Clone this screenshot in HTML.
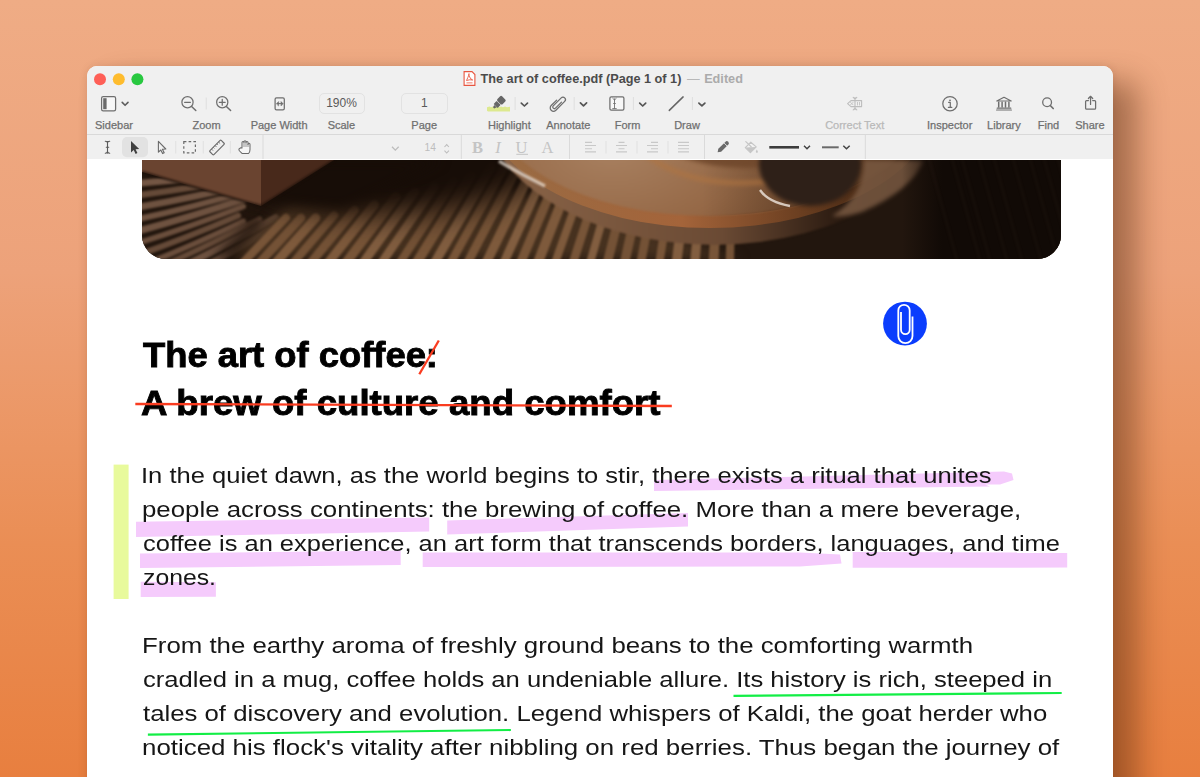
<!DOCTYPE html>
<html><head><meta charset="utf-8">
<style>
html,body{margin:0;padding:0;width:1200px;height:777px;overflow:hidden;}
body{position:relative;font-family:"Liberation Sans",sans-serif;
background:linear-gradient(180deg,#efac85 0%,#eda27a 35%,#ea8e55 70%,#e87f3f 100%);}
#shadow{position:absolute;left:87px;top:66px;width:1026px;height:800px;border-radius:10px;box-shadow:24px 16px 30px 0px rgba(70,30,8,0.42), 0 0 8px rgba(80,35,10,0.12);}
#win{position:absolute;left:87px;top:66px;width:1026px;height:760px;border-radius:10px 10px 0 0;background:#fff;}
#tb{position:absolute;left:87px;top:66px;width:1026px;height:93px;border-radius:10px 10px 0 0;background:#f0f0f0;}
#sep1{position:absolute;left:87px;top:134px;width:1026px;height:1px;background:#d9d9d9;}
#tb2{position:absolute;left:87px;top:135px;width:1026px;height:24px;background:#f0f0f0;}
#photo{position:absolute;left:142px;top:160px;width:919px;height:98.5px;border-radius:0 0 24px 24px;overflow:hidden;background:#2a1a10;}
#photo svg{display:block}
#title{position:absolute;left:480.5px;top:71px;font-size:12.7px;line-height:16px;color:#4b4b4b;white-space:nowrap;}
#title .dash{color:#b8b8b8;font-weight:normal;margin-left:2px}
#title .ed{color:#ababab;font-weight:bold;margin-left:1px}
.lbl{position:absolute;top:119.1px;-webkit-text-stroke:0.25px currentColor;width:120px;font-size:11px;line-height:13px;color:#707070;white-space:nowrap;text-align:center;}
.box{position:absolute;top:92.5px;height:21px;box-sizing:border-box;border:1px solid #e2e2e2;border-radius:5px;font-size:12px;line-height:19px;text-align:center;color:#5a5a5a;}
.txt{position:absolute;white-space:pre;color:#161616;font-size:22px;transform-origin:0 0;}
.h{position:absolute;white-space:pre;color:#000;font-weight:bold;font-size:35px;transform-origin:0 0;-webkit-text-stroke:0.9px #000;}
svg.ov{position:absolute;left:0;top:0;}

</style></head><body>
<div id="shadow"></div>
<div id="win"></div>
<div id="tb"></div>
<div id="sep1"></div>
<div id="photo"><svg width="919" height="99" viewBox="0 0 919 99">
<defs><filter id="b05" filterUnits="userSpaceOnUse" color-interpolation-filters="sRGB" x="-100" y="-100" width="1120" height="300"><feGaussianBlur stdDeviation="0.6"/></filter><filter id="b1" filterUnits="userSpaceOnUse" color-interpolation-filters="sRGB" x="-100" y="-100" width="1120" height="300"><feGaussianBlur stdDeviation="1.1"/></filter><filter id="b2" filterUnits="userSpaceOnUse" color-interpolation-filters="sRGB" x="-100" y="-100" width="1120" height="300"><feGaussianBlur stdDeviation="2.2"/></filter><filter id="b3" filterUnits="userSpaceOnUse" color-interpolation-filters="sRGB" x="-100" y="-100" width="1120" height="300"><feGaussianBlur stdDeviation="6"/></filter><filter id="b8" filterUnits="userSpaceOnUse" color-interpolation-filters="sRGB" x="-100" y="-100" width="1120" height="300"><feGaussianBlur stdDeviation="16"/></filter>
 <radialGradient id="gSau" gradientUnits="userSpaceOnUse" cx="480" cy="15" r="340">
  <stop offset="0" stop-color="#a57852"/><stop offset="0.3" stop-color="#936644"/><stop offset="0.55" stop-color="#74503a"/><stop offset="0.8" stop-color="#3e2818"/><stop offset="1" stop-color="#22150c"/>
 </radialGradient>
 <linearGradient id="gSide" gradientUnits="userSpaceOnUse" x1="340" y1="0" x2="830" y2="0">
  <stop offset="0" stop-color="#8a6244"/><stop offset="0.4" stop-color="#6e4c34"/><stop offset="0.7" stop-color="#2e1c10"/><stop offset="1" stop-color="#120b07"/>
 </linearGradient>
 <linearGradient id="gRim" gradientUnits="userSpaceOnUse" x1="340" y1="0" x2="830" y2="0">
  <stop offset="0" stop-color="#9a6a44"/><stop offset="0.35" stop-color="#a8622e"/><stop offset="0.62" stop-color="#7a4622"/><stop offset="1" stop-color="#20130a"/>
 </linearGradient>
 <linearGradient id="gR" gradientUnits="userSpaceOnUse" x1="760" y1="0" x2="800" y2="0"><stop offset="0" stop-color="#110a06" stop-opacity="0"/><stop offset="1" stop-color="#110a06" stop-opacity="1"/></linearGradient>
</defs>
<rect width="919" height="99" fill="#22160e"/>
<g filter="url(#b1)"><path d="M-12.0 24.0 Q55.5 18.7 127.0 7.3" stroke="#735644" stroke-width="6.9" fill="none" stroke-linecap="round"/><path d="M-12.0 36.3 Q53.1 28.2 122.2 14.2" stroke="#654a38" stroke-width="6.5" fill="none" stroke-linecap="round"/><path d="M-12.0 48.6 Q50.6 38.1 117.2 21.5" stroke="#6e5240" stroke-width="6.7" fill="none" stroke-linecap="round"/><path d="M-12.0 60.9 Q48.0 48.1 112.0 29.3" stroke="#6e5240" stroke-width="6.0" fill="none" stroke-linecap="round"/><path d="M-12.0 73.2 Q45.4 58.4 106.8 37.6" stroke="#6e5240" stroke-width="6.9" fill="none" stroke-linecap="round"/><path d="M-12.0 85.5 Q42.7 69.0 101.4 46.4" stroke="#6a4e3c" stroke-width="5.6" fill="none" stroke-linecap="round"/><path d="M-12.0 97.8 Q40.0 79.8 96.1 55.7" stroke="#654a38" stroke-width="6.1" fill="none" stroke-linecap="round"/><path d="M-1.3 106.0 Q48.1 86.7 101.4 61.3" stroke="#6a4e3c" stroke-width="5.6" fill="none" stroke-linecap="round"/><path d="M20.1 106.0 Q66.8 85.6 117.5 59.3" stroke="#654a38" stroke-width="5.6" fill="none" stroke-linecap="round"/><path d="M41.6 106.0 Q85.6 84.8 133.7 57.7" stroke="#6e5240" stroke-width="6.9" fill="none" stroke-linecap="round"/><path d="M63.0 106.0 Q104.4 84.2 149.9 56.5" stroke="#6e5240" stroke-width="6.4" fill="none" stroke-linecap="round"/></g>
<path d="M70 99 L112 56 L126 60 L98 99 Z" fill="#1c110a" filter="url(#b3)" opacity="0.8"/>
<path d="M90 99 L150 40 L340 20 L600 99 Z" fill="#46311f" filter="url(#b3)"/>
<g filter="url(#b1)"><path d="M96.0 108.0 L143.9 57.8" stroke="#785538" stroke-width="8.1" stroke-linecap="round"/><path d="M112.7 108.0 L159.0 57.8" stroke="#745236" stroke-width="8.6" stroke-linecap="round"/><path d="M129.1 108.0 L173.8 57.8" stroke="#7e5a3c" stroke-width="9.1" stroke-linecap="round"/><path d="M146.8 108.0 L192.1 55.2" stroke="#745236" stroke-width="8.2" stroke-linecap="round"/><path d="M164.5 108.0 L212.4 49.9" stroke="#745236" stroke-width="8.7" stroke-linecap="round"/><path d="M182.1 108.0 L232.3 44.6" stroke="#7e5a3c" stroke-width="9.1" stroke-linecap="round"/><path d="M200.0 108.0 L254.0 36.7" stroke="#785538" stroke-width="9.4" stroke-linecap="round"/><path d="M217.3 108.0 L272.8 31.4" stroke="#825e40" stroke-width="8.9" stroke-linecap="round"/><path d="M236.0 108.0 L292.5 26.2" stroke="#825e40" stroke-width="8.6" stroke-linecap="round"/><path d="M254.4 108.0 L311.4 20.9" stroke="#745236" stroke-width="8.2" stroke-linecap="round"/><path d="M271.3 108.0 L328.8 15.6" stroke="#785538" stroke-width="9.8" stroke-linecap="round"/><path d="M289.5 108.0 L348.5 7.7" stroke="#825e40" stroke-width="9.2" stroke-linecap="round"/><path d="M305.7 108.0 L361.6 7.7" stroke="#785538" stroke-width="8.3" stroke-linecap="round"/><path d="M322.8 108.0 L375.4 7.7" stroke="#785538" stroke-width="8.8" stroke-linecap="round"/><path d="M341.6 108.0 L390.7 7.7" stroke="#7e5a3c" stroke-width="9.5" stroke-linecap="round"/><path d="M359.4 108.0 L405.1 7.7" stroke="#825e40" stroke-width="8.7" stroke-linecap="round"/><path d="M376.4 108.0 L418.9 7.7" stroke="#785538" stroke-width="9.2" stroke-linecap="round"/><path d="M393.8 108.0 L433.0 7.7" stroke="#7e5a3c" stroke-width="9.9" stroke-linecap="round"/><path d="M411.2 108.0 L447.1 7.7" stroke="#7e5a3c" stroke-width="8.1" stroke-linecap="round"/><path d="M429.3 108.0 L461.7 7.7" stroke="#785538" stroke-width="8.6" stroke-linecap="round"/><path d="M446.5 108.0 L475.6 7.7" stroke="#825e40" stroke-width="8.0" stroke-linecap="round"/><path d="M463.9 108.0 L489.7 7.7" stroke="#745236" stroke-width="9.2" stroke-linecap="round"/><path d="M481.3 108.0 L503.9 7.7" stroke="#745236" stroke-width="9.5" stroke-linecap="round"/><path d="M497.7 108.0 L517.2 7.7" stroke="#745236" stroke-width="8.8" stroke-linecap="round"/><path d="M516.5 108.0 L532.3 7.7" stroke="#785538" stroke-width="8.2" stroke-linecap="round"/><path d="M533.8 108.0 L546.4 7.7" stroke="#825e40" stroke-width="9.8" stroke-linecap="round"/><path d="M552.3 108.0 L561.3 7.7" stroke="#825e40" stroke-width="9.4" stroke-linecap="round"/><path d="M571.2 108.0 L576.7 7.7" stroke="#785538" stroke-width="9.9" stroke-linecap="round"/><path d="M587.7 108.0 L590.0 7.7" stroke="#745236" stroke-width="8.3" stroke-linecap="round"/></g>
<ellipse cx="250" cy="5" rx="150" ry="50" fill="#170d07" filter="url(#b8)"/>
<path d="M110 40 L200 48 L300 0 L120 0 Z" fill="#170d07" filter="url(#b3)"/>
<path d="M0 0 L119 0 L119 46 L0 12 Z" fill="#6a4430"/>
<path d="M119 0 L192 0 L119 46 Z" fill="#48291b"/>
<path d="M0 12 L119 46 L192 0" stroke="#1a0e08" stroke-width="2.5" fill="none" opacity="0.7" filter="url(#b1)"/>
<defs><radialGradient id="gTop" gradientUnits="userSpaceOnUse" cx="470" cy="-10" r="300" gradientTransform="translate(470,-10) scale(1,0.6) translate(-470,10)"><stop offset="0" stop-color="#a88060"/><stop offset="0.45" stop-color="#956846"/><stop offset="0.8" stop-color="#7a4e2e"/><stop offset="1" stop-color="#4a2e1a"/></radialGradient><linearGradient id="gTopR" gradientUnits="userSpaceOnUse" x1="560" y1="0" x2="790" y2="0"><stop offset="0" stop-color="#000" stop-opacity="0"/><stop offset="0.6" stop-color="#1a100a" stop-opacity="0.35"/><stop offset="1" stop-color="#1a100a" stop-opacity="0.1"/></linearGradient><linearGradient id="gSide2" gradientUnits="userSpaceOnUse" x1="360" y1="0" x2="760" y2="0"><stop offset="0" stop-color="#8a6448"/><stop offset="0.55" stop-color="#6a4a34"/><stop offset="0.85" stop-color="#2a1a10"/><stop offset="1" stop-color="#140c08"/></linearGradient><linearGradient id="gRim2" gradientUnits="userSpaceOnUse" x1="380" y1="0" x2="780" y2="0"><stop offset="0" stop-color="#9a6a42"/><stop offset="0.4" stop-color="#a4643a"/><stop offset="0.7" stop-color="#6a3e20"/><stop offset="1" stop-color="#2a180c"/></linearGradient></defs>
<ellipse cx="572" cy="-65" rx="234" ry="150" fill="url(#gSide2)" filter="url(#b1)"/>
<ellipse cx="568" cy="-65" rx="230" ry="133" fill="url(#gRim2)" filter="url(#b05)"/>
<ellipse cx="566" cy="-69" rx="224" ry="125" fill="url(#gTop)" filter="url(#b1)"/>
<ellipse cx="566" cy="-69" rx="224" ry="125" fill="url(#gTopR)"/>
<path d="M357 1 Q378 14 403 26" stroke="#e6dcd2" stroke-width="3.5" fill="none" opacity="0.75" filter="url(#b1)"/>
<ellipse cx="600" cy="-45" rx="118" ry="68" fill="none" stroke="#b07440" stroke-width="5" opacity="0.65" filter="url(#b2)"/>
<ellipse cx="604" cy="-52" rx="110" ry="60" fill="#70482c" opacity="0.9" filter="url(#b2)"/>
<ellipse cx="668" cy="4" rx="51" ry="42" fill="#2e2018" filter="url(#b2)"/>
<path d="M618 30 Q626 42 648 46" stroke="#f0e8e0" stroke-width="2.4" fill="none" opacity="0.8" filter="url(#b05)"/>
<path d="M722 0 L782 0 Q770 30 720 52 Q700 58 690 56 Q722 36 722 0 Z" fill="#7a5a42" opacity="0.85" filter="url(#b2)"/>
<rect x="760" y="0" width="159" height="99" fill="url(#gR)"/>
<g filter="url(#b1)"><path d="M786 -5 L816 104" stroke="#3a2a20" stroke-width="3" opacity="0.12"/><path d="M809 -5 L839 104" stroke="#3a2a20" stroke-width="3" opacity="0.12"/><path d="M819 -5 L849 104" stroke="#3a2a20" stroke-width="3" opacity="0.12"/><path d="M836 -5 L866 104" stroke="#3a2a20" stroke-width="3" opacity="0.12"/><path d="M851 -5 L881 104" stroke="#3a2a20" stroke-width="3" opacity="0.12"/><path d="M870 -5 L900 104" stroke="#3a2a20" stroke-width="3" opacity="0.12"/><path d="M887 -5 L917 104" stroke="#3a2a20" stroke-width="3" opacity="0.12"/><path d="M901 -5 L931 104" stroke="#3a2a20" stroke-width="3" opacity="0.12"/><path d="M915 -5 L945 104" stroke="#3a2a20" stroke-width="3" opacity="0.12"/></g>
</svg></div>
<div id="tb2"></div>
<div id="title"><b>The art of coffee.pdf (Page 1 of 1)</b> <span class="dash">—</span> <span class="ed">Edited</span></div>
<div class="lbl" style="left:54.0px;color:#6f6f6f">Sidebar</div>
<div class="lbl" style="left:146.6px;color:#6f6f6f">Zoom</div>
<div class="lbl" style="left:219.1px;color:#6f6f6f">Page Width</div>
<div class="lbl" style="left:281.4px;color:#6f6f6f">Scale</div>
<div class="lbl" style="left:364.2px;color:#6f6f6f">Page</div>
<div class="lbl" style="left:449.4px;color:#6f6f6f">Highlight</div>
<div class="lbl" style="left:508.3px;color:#6f6f6f">Annotate</div>
<div class="lbl" style="left:567.6px;color:#6f6f6f">Form</div>
<div class="lbl" style="left:627.0px;color:#6f6f6f">Draw</div>
<div class="lbl" style="left:794.7px;color:#b9b9b9">Correct Text</div>
<div class="lbl" style="left:889.7px;color:#6f6f6f">Inspector</div>
<div class="lbl" style="left:943.9px;color:#6f6f6f">Library</div>
<div class="lbl" style="left:988.5px;color:#6f6f6f">Find</div>
<div class="lbl" style="left:1029.9px;color:#6f6f6f">Share</div>

<div class="box" style="left:318.5px;width:46px">190%</div>
<div class="box" style="left:401px;width:46.5px">1</div>
<svg class="ov" width="1200" height="777" viewBox="0 0 1200 777">
<!-- traffic lights -->
<circle cx="100" cy="79.3" r="6" fill="#fe5f57"/>
<circle cx="118.8" cy="79.3" r="6" fill="#febc2e"/>
<circle cx="137.4" cy="79.3" r="6" fill="#28c840"/>
<!-- pdf icon in title -->
<g transform="translate(463.5,71)">
 <path d="M0.6 0.6 H8.5 L11.4 3.5 V14.4 H0.6 Z" fill="#fff" stroke="#e8553f" stroke-width="1.1"/>
 <path d="M3 9.5 Q6 3 5.5 2.6 Q5 2.6 5.6 5 Q7 8.5 9.2 9 Q6.5 8.3 3 9.5 Z" fill="none" stroke="#e8553f" stroke-width="0.9"/>
 <rect x="3" y="11" width="6" height="1.6" fill="#e8553f" opacity="0.5"/>
</g>
<g fill="none" stroke="#6e6e6e" stroke-width="1.25" stroke-linecap="round" stroke-linejoin="round">
 <!-- sidebar -->
 <rect x="101.6" y="96.6" width="14" height="14.2" rx="1.6" fill="#f7f7f7"/>
 <rect x="103.2" y="98.2" width="3.4" height="11" fill="#6a6a6a" stroke="none"/>
 <path d="M122.2 102.4 L125.1 105.3 L128 102.4" stroke="#5e5e5e" stroke-width="1.6"/>
 <!-- zoom out -->
 <circle cx="187.5" cy="102.25" r="5.6"/>
 <path d="M191.6 106.5 L195.8 110.5" stroke-width="1.5"/>
 <path d="M184.6 102.3 H190.4"/>
 <!-- zoom in -->
 <circle cx="222.25" cy="102.25" r="5.6"/>
 <path d="M226.4 106.5 L230.6 110.5" stroke-width="1.5"/>
 <path d="M219.3 102.3 H225.2 M222.25 99.3 V105.2"/>
 <!-- page width -->
 <rect x="275.1" y="97.8" width="9.2" height="12" rx="1.4"/>
 <path d="M277.3 103.6 H282.3" stroke-width="1"/>
 <path d="M276.6 103.6 L278.6 101.6 V105.6 Z M283 103.6 L281 101.6 V105.6 Z" fill="#6e6e6e" stroke-width="0.6"/>
 <!-- highlight -->
 <path d="M487 107.2 L489.5 106.6 L491 107.3 L493 106.5 L495 107.2 L497 106.5 L499 107.2 L501 106.5 L503 107.2 L505 106.5 L507 107.2 L510 106.8 V111.4 L488 111.6 L487 110.8 Z" fill="#dde98f" stroke="none"/>
 <g transform="translate(498.2,103.4) rotate(45) scale(0.86)" stroke="none" fill="#666">
  <rect x="-4.2" y="-9" width="8.4" height="7.6" rx="1.6"/>
  <rect x="-3.3" y="-0.7" width="6.6" height="5" rx="0.6"/>
  <path d="M-2 4.5 H2 L1 7.5 H-1 Z"/>
 </g>
 <path d="M521.3 103.1 L524.4 106 L527.5 103.1" stroke="#555" stroke-width="1.7"/>
 <!-- annotate paperclip -->
 <g transform="translate(557.9,103.5) rotate(45)" stroke-width="1.25">
  <path d="M1.6 -3.5 V5 A1.6 1.6 0 0 1 -1.6 5 V-6.3 A2.45 2.45 0 0 1 3.3 -6.3 V6.2 A3.3 3.3 0 0 1 -3.3 6.2 V-1.5"/>
 </g>
 <path d="M580.4 102.9 L583.5 105.9 L586.6 102.9" stroke="#555" stroke-width="1.7"/>
 <!-- form -->
 <rect x="609.9" y="96.9" width="14" height="13.3" rx="1.4" fill="#f7f7f7"/>
 <path d="M614.5 98.8 V108.4 M612.8 98.4 L614.5 100 L616.2 98.4 M612.7 108.6 H616.3 M613.6 103.5 H615.4" stroke-width="0.9"/>
 <path d="M639.7 103.1 L642.7 106 L645.7 103.1" stroke="#555" stroke-width="1.7"/>
 <!-- draw -->
 <path d="M669.3 110.4 L683.1 96.9" stroke-width="1.5" stroke="#666"/>
 <path d="M698.9 103.1 L701.9 105.9 L704.9 103.1" stroke="#555" stroke-width="1.7"/>
 <!-- correct text (disabled) -->
 <g stroke="#bdbdbd" stroke-width="1.1">
  <path d="M851 100.6 H861.6 V106.6 H851 L847.6 103.6 Z"/>
  <path d="M855 97.6 V109.6 M853.2 97.4 L855 99 L856.8 97.4 M853.2 109.8 L855 108.2 L856.8 109.8"/>
  <path d="M850.6 102.4 L853 104.8 M853 102.4 L850.6 104.8" stroke-width="0.8"/>
  <path d="M857.5 102.4 V105 M859.5 102.4 V105" stroke-width="0.8"/>
 </g>
 <!-- inspector -->
 <circle cx="950" cy="103.7" r="7.2"/>
 <circle cx="950" cy="100.3" r="0.9" fill="#6e6e6e" stroke="none"/>
 <path d="M948.6 102.3 H950.3 V107.2 M948.4 107.4 H951.8" stroke-width="1.2"/>
 <!-- library -->
 <path d="M996.8 101 L1004 97.3 L1011.2 101 Z" stroke-width="1.2"/>
 <path d="M998.7 102.3 V107 M1002.1 102.3 V107 M1005.5 102.3 V107 M1008.9 102.3 V107" stroke-width="1.5"/>
 <path d="M997.2 108.2 H1010.8 M996.6 110 H1011.4" stroke-width="1.2"/>
 <!-- find -->
 <circle cx="1047.1" cy="102.3" r="4.4" stroke-width="1.3"/>
 <path d="M1050.3 105.5 L1053.2 108.5" stroke-width="1.7"/>
 <!-- share -->
 <path d="M1088.4 100.6 H1086.6 A1 1 0 0 0 1085.6 101.6 V108.2 A1 1 0 0 0 1086.6 109.2 H1094.6 A1 1 0 0 0 1095.6 108.2 V101.6 A1 1 0 0 0 1094.6 100.6 H1092.7"/>
 <path d="M1090.55 104.4 V96.4 M1088.4 98.5 L1090.55 96.3 L1092.7 98.5"/>
</g>
<!-- toolbar separators small -->
<g stroke="#dedede" stroke-width="1">
 <path d="M206.25 97.5 V109.5"/>
 <path d="M515.1 97 V110"/>
 <path d="M574.2 97 V110"/>
 <path d="M633.4 97 V110"/>
 <path d="M692.4 97 V110"/>
</g>
<!-- second toolbar -->
<rect x="122" y="137" width="26" height="20.3" rx="5" fill="#e2e2e2"/>
<g fill="none" stroke="#5a5a5a" stroke-width="1.1" stroke-linecap="round">
 <path d="M107.5 141.6 V153"/>
 <path d="M105.3 141.3 Q107.5 141.3 107.5 143 Q107.5 141.3 109.7 141.3"/>
 <path d="M105.3 153.3 Q107.5 153.3 107.5 151.6 Q107.5 153.3 109.7 153.3"/>
 <path d="M106.3 147.2 H108.7"/>
</g>
<path d="M131 141 V152.6 L133.7 150 L135.6 154 L137.4 153.1 L135.6 149.3 L139.2 149 Z" fill="#3f3f3f"/>
<path d="M158.4 141.3 V152.2 L160.8 150 L162.6 153.6 L164.2 152.8 L162.4 149.3 L165.8 149 Z" fill="none" stroke="#6a6a6a" stroke-width="1.1" stroke-linejoin="round"/>
<rect x="183.8" y="141.6" width="11.6" height="11.2" fill="none" stroke="#6a6a6a" stroke-width="1.2" stroke-dasharray="2.6 2.2"/>
<g transform="translate(217,147.5) rotate(-45)">
 <rect x="-8" y="-2.8" width="16" height="5.6" rx="0.8" fill="none" stroke="#6a6a6a" stroke-width="1.15"/>
 <path d="M-5 -2.8 V-0.6 M-2.5 -2.8 V-1.2 M0 -2.8 V-0.6 M2.5 -2.8 V-1.2 M5 -2.8 V-0.6" stroke="#6a6a6a" stroke-width="0.8"/>
</g>
<path d="M240.5 147.8 L239 149 Q238.5 149.8 239.6 151 L242 153.4 H248.6 Q250 152 250 149.5 V144.4 Q250 143.2 249 143.2 Q248 143.2 248 144.4 V142.6 Q248 141.5 247 141.5 Q246 141.5 246 142.6 V141.8 Q246 140.8 245 140.8 Q244 140.8 244 141.8 V142.4 Q244 141.4 243 141.4 Q242 141.4 242 142.4 V148 Z" fill="#f6f6f6" stroke="#6a6a6a" stroke-width="1.05" stroke-linejoin="round"/>
<path d="M244 142.4 V147 M246 142 V147 M248 144 V147" stroke="#6a6a6a" stroke-width="0.7"/>
<g stroke="#e0e0e0" stroke-width="1">
 <path d="M175.75 141 V153.5 M203.25 141 V153.5 M230.3 141 V153.5"/>
 <path d="M606 141 V153.5 M637 141 V153.5 M668 141 V153.5"/>
</g>
<g stroke="#dadada" stroke-width="1">
 <path d="M263 135 V159 M461.3 135 V159 M569.5 135 V159 M704.5 135 V159 M865.3 135 V159"/>
</g>
<path d="M392 146.7 L395.3 150.1 L398.7 146.7" fill="none" stroke="#bdbdbd" stroke-width="1.3"/>
<text x="424.6" y="151.2" font-family="Liberation Sans" font-size="10.2" fill="#bdbdbd">14</text>
<path d="M444.5 147 L446.7 144.6 L448.9 147 M444.5 150.6 L446.7 153 L448.9 150.6" fill="none" stroke="#bdbdbd" stroke-width="1.1"/>
<g font-family="Liberation Serif" fill="#c4c4c4" font-size="16.5">
 <text x="472" y="152.9" font-weight="bold">B</text>
 <text x="495.2" y="152.9" font-style="italic">I</text>
 <text x="515.5" y="152.9">U</text>
 <text x="541.6" y="152.9">A</text>
</g>
<path d="M516.3 154.3 H528" stroke="#c4c4c4" stroke-width="1"/>
<g stroke="#c8c8c8" stroke-width="1.15">
 <path d="M585 142.3 H592 M585 145.5 H596 M585 148.7 H592 M585 151.9 H596"/>
 <path d="M618.5 142.3 H624.5 M616 145.5 H627 M618.5 148.7 H624.5 M616 151.9 H627"/>
 <path d="M651 142.3 H658 M647 145.5 H658 M651 148.7 H658 M647 151.9 H658"/>
 <path d="M678 142.3 H689 M678 145.5 H689 M678 148.7 H689 M678 151.9 H689"/>
</g>
<g transform="translate(723,147) rotate(-45)">
 <path d="M-7.6 0 L-4.6 -2 H5.6 Q7.4 -2 7.4 0 Q7.4 2 5.6 2 H-4.6 Z" fill="#6a6a6a"/><path d="M3.6 -2.2 V2.2" stroke="#f0f0f0" stroke-width="0.8"/>
</g>
<path d="M745.3 147.6 L750.8 142.2 L756.2 146.9 L750.4 152.6 Z" fill="#f3f3f3" stroke="#c6c6c6" stroke-width="1.2" stroke-linejoin="round"/>
<path d="M745.6 147.6 L756 147 L750.4 152.4 Z" fill="#c6c6c6"/>
<path d="M745.8 141.6 L751.2 146.8" stroke="#c6c6c6" stroke-width="1.2" stroke-linecap="round"/>
<path d="M756.8 149.4 Q758.3 151.3 757.8 152.2 Q757 153.2 756 152.4 Q755.3 151.5 756.8 149.4 Z" fill="#c6c6c6"/>
<path d="M769.3 147.3 H799" stroke="#3c3c3c" stroke-width="2.6"/>
<path d="M822 147.3 H838.7" stroke="#6a6a6a" stroke-width="2"/>
<path d="M804 145.7 L807 148.7 L810 145.7 M843.3 145.7 L846.5 148.7 L849.7 145.7" fill="none" stroke="#444" stroke-width="1.5"/>
</svg>

<svg class="ov" width="1200" height="777" viewBox="0 0 1200 777">
<g fill="#f5cbfc">
 <path d="M654 480 L1004 471.5 L1012 473.5 L1013.5 480 L1000 484.5 L985 484.5 L990 486.5 L654 491 Z"/>
 <path d="M136 521.8 L429.2 517.5 L429.2 531.5 L136 536.9 Z"/>
 <path d="M447.2 520.5 L688 513 L688 526.5 L447.2 534.5 Z"/>
 <path d="M140 553.5 L400.7 550.5 L400.7 565 L140 568 Z"/>
 <path d="M422.7 552.5 L800 552.5 L840 554.5 L841.5 563.5 L800 566.5 L422.7 567 Z"/>
 <path d="M852.7 552 L1067.2 552.5 L1067.2 567.6 L852.7 567.8 Z"/>
 <path d="M140.7 581.8 L215.9 582.3 L215.9 596.7 L140.7 597 Z"/>
</g>
<rect x="113.6" y="464.6" width="15" height="134.4" fill="#e8fa9c"/>
</svg>

<div class="txt" style="left:141.28px;top:458.88px;line-height:33px;transform:scaleX(1.1610)">In the quiet dawn, as the world begins to stir, there exists a ritual that unites</div>
<div class="txt" style="left:141.83px;top:492.88px;line-height:33px;transform:scaleX(1.1734)">people across continents: the brewing of coffee. More than a mere beverage,</div>
<div class="txt" style="left:143.00px;top:526.88px;line-height:33px;transform:scaleX(1.1577)">coffee is an experience, an art form that transcends borders, languages, and time</div>
<div class="txt" style="left:143.00px;top:560.88px;line-height:33px;transform:scaleX(1.1255)">zones.</div>
<div class="txt" style="left:142.43px;top:628.88px;line-height:33px;transform:scaleX(1.1739)">From the earthy aroma of freshly ground beans to the comforting warmth</div>
<div class="txt" style="left:143.00px;top:662.88px;line-height:33px;transform:scaleX(1.1640)">cradled in a mug, coffee holds an undeniable allure. Its history is rich, steeped in</div>
<div class="txt" style="left:143.00px;top:696.88px;line-height:33px;transform:scaleX(1.1699)">tales of discovery and evolution. Legend whispers of Kaldi, the goat herder who</div>
<div class="txt" style="left:141.82px;top:730.88px;line-height:33px;transform:scaleX(1.1755)">noticed his flock's vitality after nibbling on red berries. Thus began the journey of</div>
<div class="h" style="left:143.00px;top:328.77px;line-height:52px;transform:scaleX(1.0389)">The art of coffee:</div>
<div class="h" style="left:140.80px;top:376.87px;line-height:52px;transform:scaleX(1.0463)">A brew of culture and comfort</div>

<svg class="ov" width="1200" height="777" viewBox="0 0 1200 777">
<g stroke="#fa3c20" stroke-width="2.3" fill="none">
 <path d="M135.3 404 L671.8 406"/>
 <path d="M419.3 374.3 L438.8 340.5"/>
</g>
<g stroke="#12ee45" stroke-width="2.2" fill="none">
 <path d="M733.5 695.8 Q900 693.8 1061.7 693"/>
 <path d="M147.9 734.6 L510.9 730"/>
</g>
<circle cx="905" cy="323.6" r="21.9" fill="#0b3dfd"/>
<path d="M912.5 316.4 V336 A7.1 7.1 0 0 1 898.3 336 V310.5 A5.7 5.7 0 0 1 909.7 310.5 V329.8 A4.35 4.35 0 0 1 901 329.8 V312" fill="none" stroke="#fff" stroke-width="1.8"/>
</svg>

</body></html>
